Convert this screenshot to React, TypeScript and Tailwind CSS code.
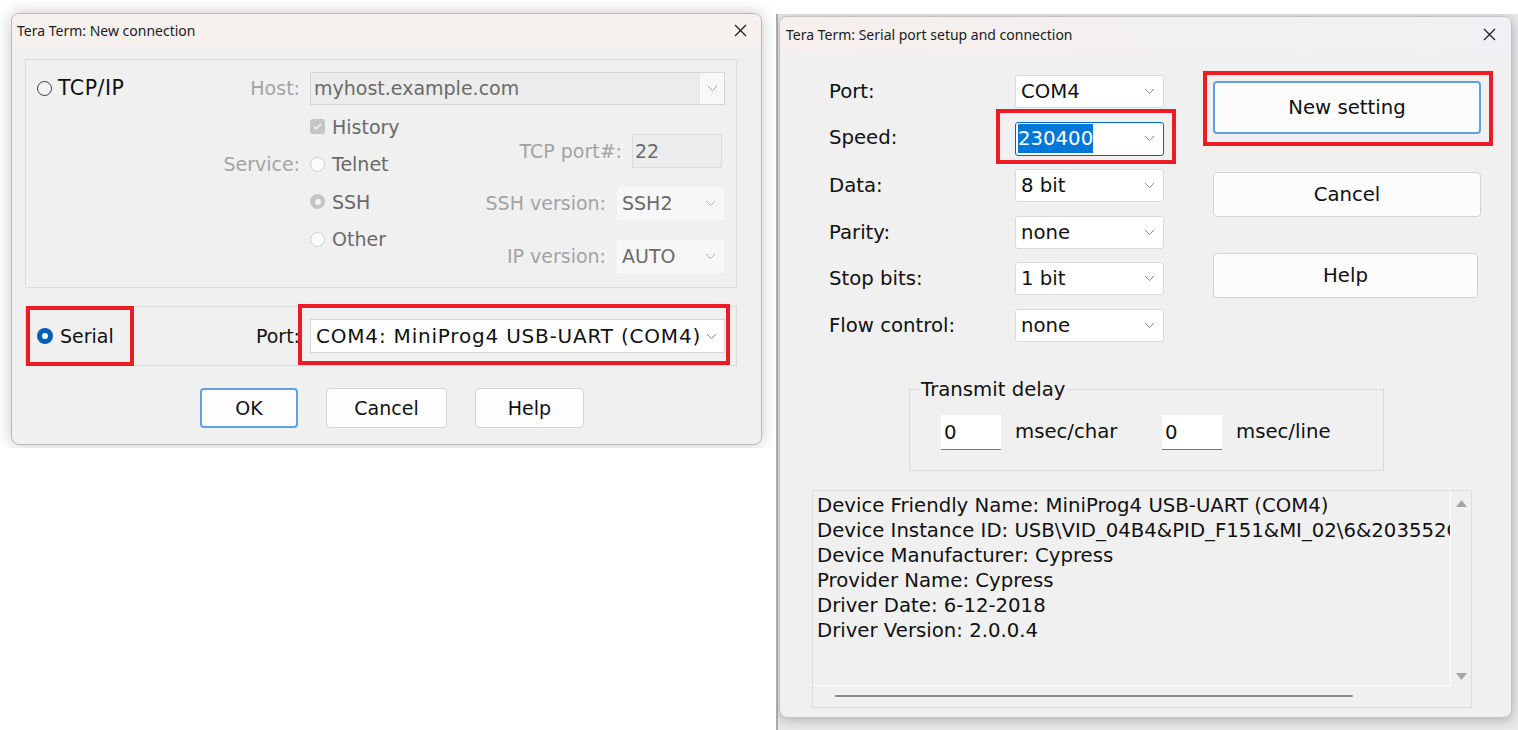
import React from 'react'

const ui = "font-['DejaVu_Sans',Verdana,sans-serif]"
const titleFont = "font-['Noto_Sans',sans-serif]"

function Chevron({ className }: { className?: string }) {
  return (
    <svg width="11" height="7" viewBox="0 0 11 7" className={className}>
      <path d="M1 1l4.5 4.5L10 1" fill="none" stroke="currentColor" strokeWidth="1" />
    </svg>
  )
}

function CloseX() {
  return (
    <svg width="13" height="13" viewBox="0 0 13 13" className="text-[#1a1a1a]">
      <path d="M1 1l11 11M12 1L1 12" stroke="currentColor" strokeWidth="1.2" fill="none" />
    </svg>
  )
}

function Radio({ state }: { state: 'off' | 'offDisabled' | 'onDisabled' | 'on' }) {
  if (state === 'on') {
    return (
      <span className="flex h-[16px] w-[16px] items-center justify-center rounded-full bg-[#005fb8]">
        <span className="h-[6px] w-[6px] rounded-full bg-white" />
      </span>
    )
  }
  if (state === 'onDisabled') {
    return (
      <span className="flex h-[15px] w-[15px] items-center justify-center rounded-full bg-[#c5c5c5]">
        <span className="h-[6px] w-[6px] rounded-full bg-[#f4f4f4]" />
      </span>
    )
  }
  return (
    <span
      className={
        state === 'off'
          ? 'h-[15px] w-[15px] rounded-full border border-[#3a3a3a] bg-[#f3f3f3]'
          : 'h-[15px] w-[15px] rounded-full border border-[#cfcfcf] bg-[#fbfbfb]'
      }
    />
  )
}

function DisabledCheck() {
  return (
    <span className="flex h-[15px] w-[15px] items-center justify-center rounded-[3px] bg-[#c5c5c5]">
      <svg width="9" height="7" viewBox="0 0 9 7">
        <path d="M1 3.5l2.3 2.3L8 1" stroke="#f4f4f4" strokeWidth="1.4" fill="none" />
      </svg>
    </span>
  )
}

function NewConnection() {
  return (
    <div className="flex h-[432px] w-[751px] flex-col overflow-hidden rounded-[8px] border border-[#b9b9b9] bg-[#f0f0f0] shadow-[0_0_16px_rgba(0,0,0,0.22)]">
      <div className={`flex h-[32px] items-center justify-between bg-[#f6f1ee] pl-[5px] pr-[14px] text-[14px] text-[#1b1b1b] ${titleFont}`}>
        <span>Tera Term: New connection</span>
        <CloseX />
      </div>

      <div className={`flex flex-1 flex-col px-[13px] pt-[13px] text-[19px] ${ui}`}>
        {/* TCP/IP group */}
        <div className="h-[229px] w-[712px] border border-[#dcdcdc]">
          <div className="mt-[12px] grid h-[33px] grid-cols-[274px_415px] gap-x-[10px]">
            <div className="flex items-center justify-between pl-[11px]">
              <span className="flex items-center gap-[6px]">
                <Radio state="off" />
                <span className="text-[20.5px] tracking-[0.5px] text-[#111]">TCP/IP</span>
              </span>
              <span className="text-[#a3a3a3]">Host:</span>
            </div>
            <div className="flex items-center justify-between border border-[#d6d6d6] bg-[#ececec] pl-[3px] text-[#6a6a6a]">
              <span>myhost.example.com</span>
              <span className="flex h-full w-[24px] items-center justify-center bg-[#f8f8f8] text-[#a8a8a8]">
                <Chevron />
              </span>
            </div>
          </div>

          <div className="flex">
            <div className="mt-[3px] grid auto-rows-[37.5px] grid-cols-[274px_auto] gap-x-[10px]">
              <div />
              <div className="flex items-center gap-[7px] text-[#6a6a6a]">
                <DisabledCheck />
                <span>History</span>
              </div>
              <div className="flex items-center justify-end text-[#a3a3a3]">Service:</div>
              <div className="flex items-center gap-[7px] text-[#6a6a6a]">
                <Radio state="offDisabled" />
                <span>Telnet</span>
              </div>
              <div />
              <div className="flex items-center gap-[7px] text-[#6a6a6a]">
                <Radio state="onDisabled" />
                <span>SSH</span>
              </div>
              <div />
              <div className="flex items-center gap-[7px] text-[#6a6a6a]">
                <Radio state="offDisabled" />
                <span>Other</span>
              </div>
            </div>

            <div className="flex flex-1 flex-col items-end pr-[12px] pt-[29px]">
              <div className="mr-[2px] flex items-center gap-[10px]">
                <span className="text-[#a3a3a3]">TCP port#:</span>
                <span className="flex h-[34px] w-[90px] items-center border border-[#dcdcdc] bg-[#ececec] pl-[2px] text-[#6a6a6a]">
                  22
                </span>
              </div>
              <div className="mt-[19px] flex items-center gap-[11px]">
                <span className="text-[#a3a3a3]">SSH version:</span>
                <span className="flex h-[33px] w-[107px] items-center justify-between bg-[#f7f7f7] pl-[5px] pr-[8px] text-[#6a6a6a]">
                  SSH2
                  <Chevron className="text-[#b0b0b0]" />
                </span>
              </div>
              <div className="mt-[20px] flex items-center gap-[11px]">
                <span className="text-[#a3a3a3]">IP version:</span>
                <span className="flex h-[33px] w-[107px] items-center justify-between bg-[#f7f7f7] pl-[5px] pr-[8px] text-[#6a6a6a]">
                  AUTO
                  <Chevron className="text-[#b0b0b0]" />
                </span>
              </div>
            </div>
          </div>
        </div>

        {/* Serial group */}
        <div className="relative mt-[18px] grid h-[60px] w-[712px] grid-cols-[274px_415px] gap-x-[10px] border border-[#dcdcdc]">
          <div className="flex items-center justify-between pl-[11px]">
            <span className="flex items-center gap-[7px]">
              <Radio state="on" />
              <span className="text-[#111]">Serial</span>
            </span>
            <span className="text-[#111]">Port:</span>
          </div>
          <div className="flex items-center">
            <div className="relative flex h-[34px] w-full items-center justify-between border border-[#d6d6d6] bg-white pl-[5px] pr-[7px] text-[#111]">
              <span className="text-[20px] tracking-[0.8px]">COM4: MiniProg4 USB-UART (COM4)</span>
              <Chevron className="text-[#8a8a8a]" />
              <span className="absolute -bottom-[13px] -left-[13px] -right-[6px] -top-[16px] border-4 border-[#ed1c24]" />
            </div>
          </div>
          <span className="absolute -top-px left-0 h-[60px] w-[108px] border-4 border-[#ed1c24]" />
        </div>

        {/* Buttons */}
        <div className="mt-[22px] flex gap-[28px] pl-[175px] text-[#111]">
          <button className="h-[40px] w-[98px] rounded-[4px] border-2 border-[#5ea1e2] bg-[#fdfdfd]">OK</button>
          <button className="h-[40px] w-[121px] rounded-[4px] border border-[#d3d3d3] bg-[#fdfdfd]">Cancel</button>
          <button className="h-[40px] w-[109px] rounded-[4px] border border-[#d3d3d3] bg-[#fdfdfd]">Help</button>
        </div>
      </div>
    </div>
  )
}

const serialRows = [
  { label: 'Port:', value: 'COM4' },
  { label: 'Speed:', value: '230400', focus: true },
  { label: 'Data:', value: '8 bit' },
  { label: 'Parity:', value: 'none' },
  { label: 'Stop bits:', value: '1 bit' },
  { label: 'Flow control:', value: 'none' },
]

const infoLines = [
  'Device Friendly Name: MiniProg4 USB-UART (COM4)',
  'Device Instance ID: USB\\VID_04B4&PID_F151&MI_02\\6&203552C7&0&0002',
  'Device Manufacturer: Cypress',
  'Provider Name: Cypress',
  'Driver Date: 6-12-2018',
  'Driver Version: 2.0.0.4',
]

function SerialSetup() {
  return (
    <div className="flex h-[702px] w-[733px] flex-col overflow-hidden rounded-[8px] border border-[#c2c2c2] bg-[#f0f0f0] shadow-[0_2px_12px_rgba(0,0,0,0.25)]">
      <div className={`flex h-[34px] items-center justify-between bg-linear-to-r from-[#f6efec] to-[#f0f1f4] pl-[6px] pr-[15px] text-[14px] text-[#1b1b1b] ${titleFont}`}>
        <span>Tera Term: Serial port setup and connection</span>
        <CloseX />
      </div>

      <div className={`flex flex-1 flex-col text-[19.7px] text-[#111] ${ui}`}>
        <div className="flex">
          <div className="grid grid-cols-[186px_149px] gap-y-[13.6px] pl-[49px] pt-[24px]">
            {serialRows.map((r) => (
              <React.Fragment key={r.label}>
                <div className="flex h-[33px] items-center">{r.label}</div>
                <div
                  className={
                    r.focus
                      ? 'relative flex h-[34px] items-center justify-between rounded-[3px] border border-[#0067c0] bg-white pl-[2px] pr-[8px]'
                      : 'relative flex h-[33px] items-center justify-between rounded-[3px] border border-[#dadada] bg-white pl-[5px] pr-[8px]'
                  }
                >
                  {r.focus ? (
                    <span className="bg-[#0078d7] text-white">{r.value}</span>
                  ) : (
                    <span>{r.value}</span>
                  )}
                  <Chevron className="text-[#8a8a8a]" />
                  {r.focus && (
                    <span className="absolute -bottom-[9px] -left-[20px] -right-[13px] -top-[14px] border-4 border-[#ed1c24]" />
                  )}
                </div>
              </React.Fragment>
            ))}
          </div>

          <div className="ml-[49px] flex flex-col pt-[30px]">
            <div className="relative">
              <button className="h-[53px] w-[268px] rounded-[4px] border-2 border-[#5ea1e2] bg-[#fcfcfc]">New setting</button>
              <span className="absolute -bottom-[12px] -left-[10px] -right-[12px] -top-[10px] border-4 border-[#ed1c24]" />
            </div>
            <button className="mt-[38px] h-[45px] w-[268px] rounded-[4px] border border-[#d3d3d3] bg-[#fcfcfc]">Cancel</button>
            <button className="mt-[36px] h-[45px] w-[265px] rounded-[4px] border border-[#d3d3d3] bg-[#fcfcfc]">Help</button>
          </div>
        </div>

        <fieldset className="ml-[129px] mt-[33px] h-[96px] w-[475px] border border-[#dadada]">
          <legend className="ml-[9px] px-[2px]">Transmit delay</legend>
          <div className="flex items-center pl-[31px] pt-[10px]">
            <span className="flex h-[35px] w-[60px] items-start border-b border-[#7a7a7a] bg-white pl-[3px] pt-[3px]">0</span>
            <span className="ml-[14px] w-[147px]">msec/char</span>
            <span className="flex h-[35px] w-[60px] items-start border-b border-[#7a7a7a] bg-white pl-[3px] pt-[3px]">0</span>
            <span className="ml-[14px]">msec/line</span>
          </div>
        </fieldset>

        <div className="ml-[32px] mt-[19px] flex h-[218px] w-[660px] flex-col border border-[#dcdcdc]">
          <div className="flex flex-1">
            <div className="w-[638px] overflow-hidden whitespace-nowrap border-b border-r border-white pl-[4px] pt-[2px] leading-[25px]">
              {infoLines.map((l) => (
                <div key={l}>{l}</div>
              ))}
            </div>
            <div className="flex flex-1 flex-col items-center justify-between pb-[6px] pt-[9px]">
              <svg width="11" height="7" viewBox="0 0 11 7">
                <path d="M5.5 0L11 7H0z" fill="#a6a6a6" />
              </svg>
              <svg width="11" height="7" viewBox="0 0 11 7">
                <path d="M0 0h11L5.5 7z" fill="#a6a6a6" />
              </svg>
            </div>
          </div>
          <div className="flex h-[21px] items-center pl-[22px]">
            <span className="h-[2px] w-[518px] rounded-full bg-[#8c8c8c]" />
          </div>
        </div>
      </div>
    </div>
  )
}

export default function App() {
  return (
    <div className="flex h-[730px] w-[1518px] items-start overflow-hidden bg-white">
      <div className="h-[448px] w-[776px] shrink-0 overflow-hidden bg-white pl-[11px] pt-[13px]">
        <NewConnection />
      </div>
      <div className="mt-[14px] h-[716px] w-[742px] shrink-0 overflow-hidden border-l-2 border-[#a9a9a9] bg-[#e9e9e9] pl-px pt-[2px]">
        <SerialSetup />
      </div>
    </div>
  )
}
